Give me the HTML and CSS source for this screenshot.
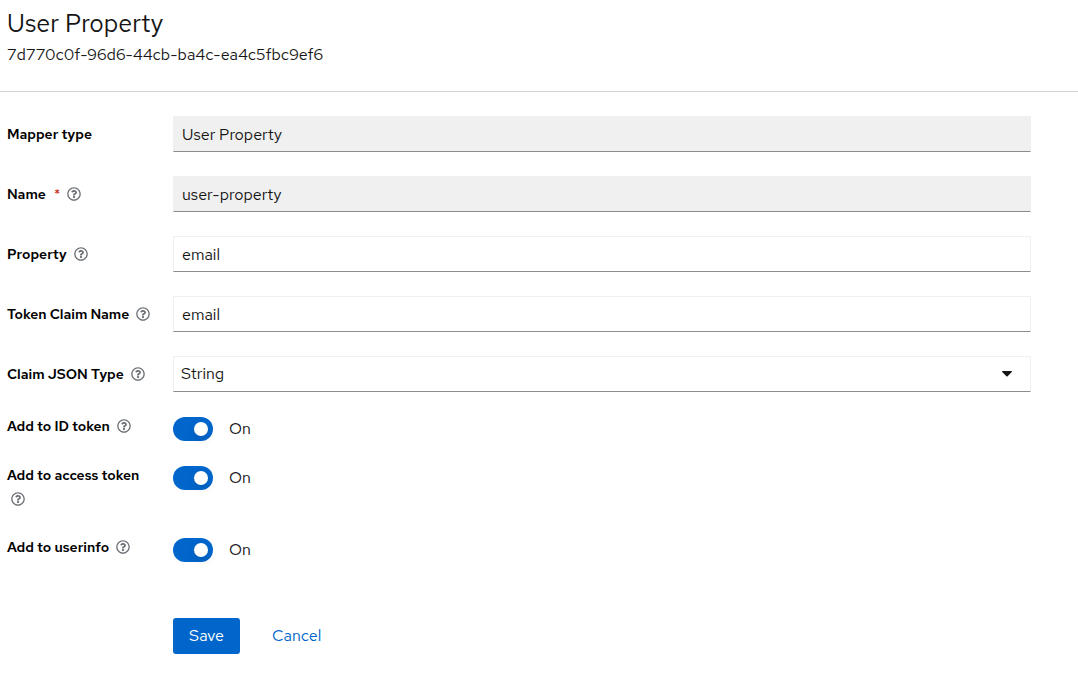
FILE: index.html
```
<!DOCTYPE html>
<html lang="en">
<head>
<meta charset="utf-8">
<meta name="viewport" content="width=device-width, initial-scale=1">
<title>User Property</title>
<link rel="stylesheet" href="styles.css">
</head>
<body>
<svg class="sprite" aria-hidden="true">
  <symbol id="help" viewBox="0 0 512 512"><path d="M256 8C119.043 8 8 119.083 8 256c0 136.997 111.043 248 248 248s248-111.003 248-248C504 119.083 392.957 8 256 8zm0 448c-110.532 0-200-89.431-200-200 0-110.495 89.472-200 200-200 110.491 0 200 89.471 200 200 0 110.53-89.431 200-200 200zm107.244-255.2c0 67.052-72.421 68.084-72.421 92.863V300c0 6.627-5.373 12-12 12h-45.647c-6.627 0-12-5.373-12-12v-8.659c0-35.745 27.1-50.034 47.579-61.516 17.561-9.845 28.324-16.541 28.324-29.579 0-17.246-21.999-28.693-39.784-28.693-23.189 0-33.894 10.977-48.942 29.969-4.057 5.12-11.46 6.071-16.666 2.124l-27.824-21.098c-5.107-3.872-6.251-11.066-2.644-16.363C184.846 131.491 214.94 112 261.794 112c49.071 0 101.45 38.304 101.45 88.8zM298 368c0 23.159-18.841 42-42 42s-42-18.841-42-42 18.841-42 42-42 42 18.841 42 42z"/></symbol>
</svg>
<header class="page-header">
  <h1 class="title">User Property</h1>
  <p class="subtitle">7d770c0f-96d6-44cb-ba4c-ea4c5fbc9ef6</p>
</header>
<main>
  <form class="form">
    <div class="row">
      <div class="row-label"><label for="mapper">Mapper type</label></div>
      <input class="field readonly" id="mapper" type="text" value="User Property" readonly>
    </div>
    <div class="row">
      <div class="row-label"><label for="name">Name<span class="required">*</span></label> <button class="help" type="button" aria-label="Help for Name"><svg><use href="#help"/></svg></button></div>
      <input class="field readonly" id="name" type="text" value="user-property" readonly>
    </div>
    <div class="row">
      <div class="row-label"><label for="property">Property</label> <button class="help" type="button" aria-label="Help for Property"><svg><use href="#help"/></svg></button></div>
      <input class="field" id="property" type="text" value="email">
    </div>
    <div class="row">
      <div class="row-label"><label for="claim">Token Claim Name</label> <button class="help" type="button" aria-label="Help for Token Claim Name"><svg><use href="#help"/></svg></button></div>
      <input class="field" id="claim" type="text" value="email">
    </div>
    <div class="row">
      <div class="row-label"><label for="json">Claim JSON Type</label> <button class="help" type="button" aria-label="Help for Claim JSON Type"><svg><use href="#help"/></svg></button></div>
      <div class="select-wrap">
        <select class="field select" id="json"><option>String</option></select>
        <svg class="caret" viewBox="0 0 10 6" aria-hidden="true"><path d="M.7 0h8.6c.6 0 .9.7.5 1.1L5.6 5.3c-.3.3-.9.3-1.2 0L.2 1.1C-.2.7.1 0 .7 0z"/></svg>
      </div>
    </div>
    <div class="row row-switch">
      <div class="row-label"><label for="idtoken">Add to ID token</label> <button class="help" type="button" aria-label="Help for Add to ID token"><svg><use href="#help"/></svg></button></div>
      <div class="switch"><input class="toggle" id="idtoken" type="checkbox" role="switch" checked><label for="idtoken">On</label></div>
    </div>
    <div class="row row-switch">
      <div class="row-label"><label for="access">Add to access token</label> <button class="help" type="button" aria-label="Help for Add to access token"><svg><use href="#help"/></svg></button></div>
      <div class="switch"><input class="toggle" id="access" type="checkbox" role="switch" checked><label for="access">On</label></div>
    </div>
    <div class="row row-switch">
      <div class="row-label"><label for="userinfo">Add to userinfo</label> <button class="help" type="button" aria-label="Help for Add to userinfo"><svg><use href="#help"/></svg></button></div>
      <div class="switch"><input class="toggle" id="userinfo" type="checkbox" role="switch" checked><label for="userinfo">On</label></div>
    </div>
    <div class="actions">
      <button class="btn primary" type="submit">Save</button>
      <a class="btn link" href="#">Cancel</a>
    </div>
  </form>
</main>
</body>
</html>
```
FILE: styles.css
```
* {
  box-sizing: border-box;
}

body {
  margin: 0;
  background: #fff;
  color: #151515;
  font: 16px/24px "Red Hat Text", Inter, sans-serif;
}

.sprite {
  display: none;
}

.page-header {
  padding: 8px 7px 24px;
  border-bottom: 1px solid #d2d2d2;
}

.title {
  margin: 0;
  font-size: 25px;
  font-weight: 400;
  line-height: 32px;
}

.subtitle {
  margin: 3px 0 0;
}

.form {
  display: grid;
  gap: 24px;
  padding: 24px 47px 24px 7px;
}

.row {
  display: grid;
  grid-template-columns: 150px minmax(0, 1fr);
  column-gap: 16px;
}

.row-label {
  padding-top: 6px;
  color: #000;
  font-size: 14px;
  font-weight: 600;
}

.row-switch .row-label {
  margin-top: -2px;
  padding: 0 0 2px;
}

.required {
  margin-left: 8px;
  color: #c9190b;
  font-weight: 400;
}

.help {
  padding: 0 4px;
  border: 0;
  background: none;
  color: #6a6e73;
  line-height: 14px;
  vertical-align: -2px;
}

.help svg {
  display: block;
  width: 14px;
  height: 14px;
  fill: currentColor;
}

.field {
  width: 100%;
  height: 36px;
  padding: 0 8px;
  border: 1px solid #f0f0f0;
  border-bottom-color: #8a8d90;
  border-radius: 0;
  background: #fff;
  color: #151515;
  font: inherit;
}

.readonly {
  background: #f0f0f0;
}

.select-wrap {
  position: relative;
  display: grid;
}

.select {
  appearance: none;
  padding: 0 7px;
}

.caret {
  position: absolute;
  top: 15px;
  right: 19px;
  width: 10px;
  height: 6px;
  fill: #151515;
  pointer-events: none;
}

.switch {
  display: flex;
  align-items: center;
  align-self: start;
  gap: 16px;
  padding-top: 1px;
}

.toggle {
  display: flex;
  align-items: center;
  justify-content: flex-end;
  appearance: none;
  width: 40px;
  height: 24px;
  margin: 0;
  padding: 0 5px;
  border-radius: 12px;
  background: #06c;
}

.toggle::before {
  content: "";
  width: 14px;
  height: 14px;
  border-radius: 50%;
  background: #fff;
  box-shadow: 0 4px 8px rgb(3 3 3 / 12%);
}

.toggle:not(:checked) {
  justify-content: flex-start;
  background: #8a8d90;
}

.actions {
  display: flex;
  gap: 16px;
  padding: 32px 0 0 166px;
}

.btn {
  padding: 6px 16px;
  border: 0;
  border-radius: 3px;
  font: inherit;
  text-decoration: none;
}

.primary {
  background: #06c;
  color: #fff;
}

.link {
  color: #06c;
}
```
